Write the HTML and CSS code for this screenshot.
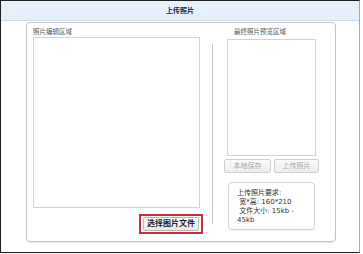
FILE: index.html
```html
<!DOCTYPE html>
<html lang="zh">
<head>
<meta charset="utf-8">
<link rel="stylesheet" href="styles.css">
</head>
<body>
<div class="frame">
  <div class="header">上传照片</div>
  <div class="panel">
    <div class="left-col">
      <div class="label">照片编辑区域</div>
      <div class="edit-box"></div>
      <div class="btn-row">
        <div class="red-ring"><button class="btn-choose">选择图片文件</button></div>
      </div>
    </div>
    <div class="divider"></div>
    <div class="right-col">
      <div class="label label-right">最终照片预览区域</div>
      <div class="preview-box"></div>
      <div class="action-row">
        <button class="btn-disabled btn-save">本地保存</button>
        <button class="btn-disabled btn-upload">上传照片</button>
      </div>
      <div class="info-box">
        <div>上传照片要求:</div>
        <div>&nbsp;宽*高: 160*210</div>
        <div>&nbsp;文件大小: 15kb -</div>
        <div>45kb</div>
      </div>
    </div>
  </div>
</div>
</body>
</html>
```
FILE: styles.css
```css
* { box-sizing: border-box; }
html, body { margin: 0; padding: 0; background: #fff; }
body {
  font-family: "Liberation Sans", "Noto Sans CJK SC", sans-serif;
  color: #444;
}
.frame {
  width: 360px;
  height: 253px;
  border-top: 1px solid #1e1e1e;
  border-left: 1px solid #1e1e1e;
  border-right: 1px solid #a8a8a8;
  border-bottom: 1px solid #1e1e1e;
  background: #fff;
}
.header {
  height: 20px;
  background: #e6f0fb;
  border-bottom: 1px solid #c9dcee;
  text-align: center;
  font-size: 7px;
  line-height: 19px;
  font-weight: bold;
  color: #1d2b3c;
}
.panel {
  margin: 1px 0 0 25px;
  width: 310px;
  height: 220px;
  border: 1px solid #c6c6c6;
  border-radius: 4px;
  display: flex;
  padding: 4px 0 0 6px;
  box-shadow: 0 1px 1px #e4e4e4;
}
.label {
  font-size: 6.5px;
  line-height: 10px;
  height: 10px;
  color: #555;
  white-space: nowrap;
}
.left-col {
  width: 170px;
  display: flex;
  flex-direction: column;
}
.edit-box {
  width: 167px;
  height: 171px;
  border: 1px solid #d2d2d2;
  background: #fff;
}
.btn-row {
  display: flex;
  justify-content: flex-end;
  margin-top: 6px;
}
.red-ring {
  width: 64px;
  height: 20px;
  border: 2px solid #c62e33;
  padding: 1px 2px;
  display: flex;
}
.btn-choose {
  flex: 1;
  margin: 0;
  padding: 0;
  border: 1px solid #b9b9b9;
  border-radius: 2px;
  background: linear-gradient(#ffffff, #e9e9e9);
  font-family: "Liberation Sans", "Noto Sans CJK SC", sans-serif;
  font-size: 8px;
  font-weight: bold;
  color: #222;
  line-height: 12px;
}
.divider {
  width: 1px;
  height: 180px;
  margin: 17px 0 0 9px;
  background: #c8c8c8;
}
.right-col {
  width: 95px;
  margin-left: 11px;
  display: flex;
  flex-direction: column;
}
.label-right { padding-left: 10px; }
.preview-box {
  width: 89px;
  height: 117px;
  margin: 2px 0 0 3px;
  border: 1px solid #d2d2d2;
}
.action-row {
  display: flex;
  gap: 3px;
  margin-top: 3px;
  height: 14px;
}
.btn-disabled {
  margin: 0;
  padding: 0;
  height: 14px;
  border: 1px solid #d0d0d0;
  border-radius: 2px;
  background: linear-gradient(#fbfbfb, #ececec);
  font-family: "Liberation Sans", "Noto Sans CJK SC", sans-serif;
  font-size: 7px;
  color: #a8a8a8;
  line-height: 12px;
}
.btn-save { width: 47px; }
.btn-upload { width: 45px; }
.info-box {
  width: 87px;
  height: 48px;
  margin: 9px 0 0 4px;
  border: 1px solid #d4d4d4;
  border-radius: 4px;
  padding: 6px 0 0 8px;
  font-family: "DejaVu Sans", "Noto Sans CJK SC", sans-serif;
  font-size: 7px;
  line-height: 9px;
  color: #333;
  white-space: nowrap;
  box-shadow: 0 1px 1px #ececec;
}
```
